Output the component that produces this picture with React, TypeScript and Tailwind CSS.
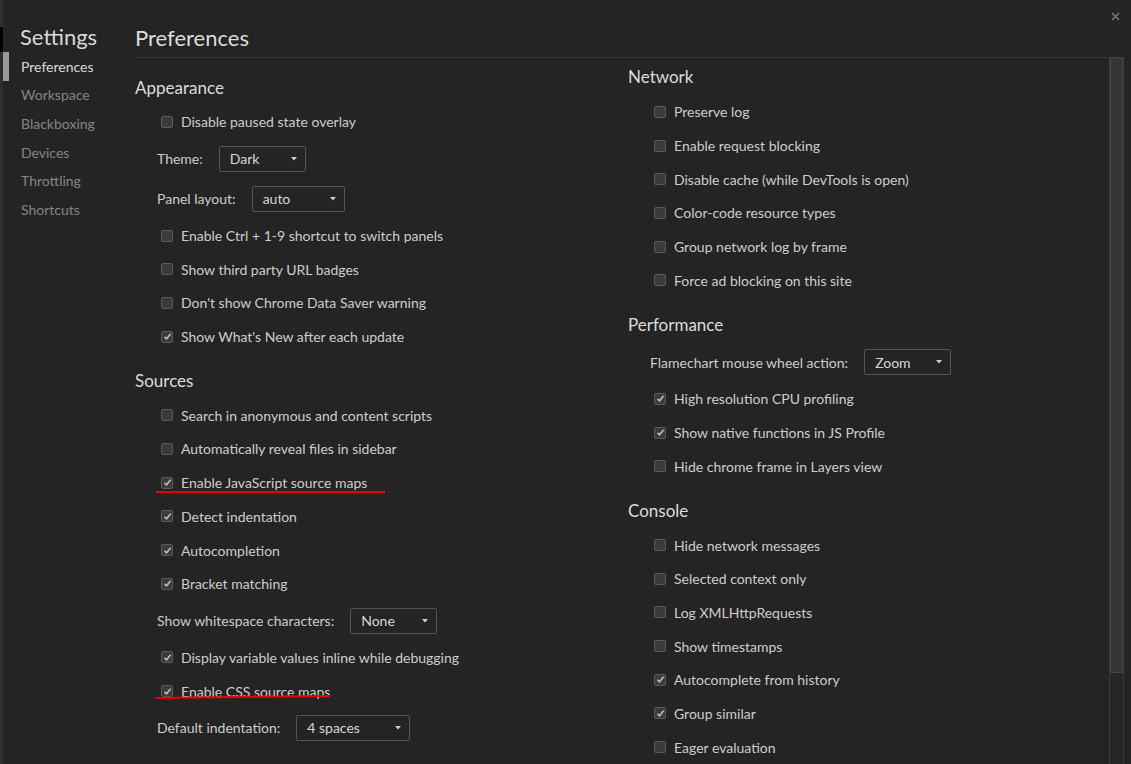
import React from "react";

type Item =
  | { kind: "check"; label: string; checked?: boolean; mark?: "js" | "css" }
  | { kind: "select"; label: string; value: string; width: string };

type Section = { title: string; items: Item[] };

const leftSections: Section[] = [
  {
    title: "Appearance",
    items: [
      { kind: "check", label: "Disable paused state overlay" },
      { kind: "select", label: "Theme:", value: "Dark", width: "w-[87px]" },
      { kind: "select", label: "Panel layout:", value: "auto", width: "w-[93px]" },
      { kind: "check", label: "Enable Ctrl + 1-9 shortcut to switch panels" },
      { kind: "check", label: "Show third party URL badges" },
      { kind: "check", label: "Don't show Chrome Data Saver warning" },
      { kind: "check", label: "Show What's New after each update", checked: true },
    ],
  },
  {
    title: "Sources",
    items: [
      { kind: "check", label: "Search in anonymous and content scripts" },
      { kind: "check", label: "Automatically reveal files in sidebar" },
      { kind: "check", label: "Enable JavaScript source maps", checked: true, mark: "js" },
      { kind: "check", label: "Detect indentation", checked: true },
      { kind: "check", label: "Autocompletion", checked: true },
      { kind: "check", label: "Bracket matching", checked: true },
      { kind: "select", label: "Show whitespace characters:", value: "None", width: "w-[87px]" },
      { kind: "check", label: "Display variable values inline while debugging", checked: true },
      { kind: "check", label: "Enable CSS source maps", checked: true, mark: "css" },
      { kind: "select", label: "Default indentation:", value: "4 spaces", width: "w-[114px]" },
    ],
  },
];

const rightSections: Section[] = [
  {
    title: "Network",
    items: [
      { kind: "check", label: "Preserve log" },
      { kind: "check", label: "Enable request blocking" },
      { kind: "check", label: "Disable cache (while DevTools is open)" },
      { kind: "check", label: "Color-code resource types" },
      { kind: "check", label: "Group network log by frame" },
      { kind: "check", label: "Force ad blocking on this site" },
    ],
  },
  {
    title: "Performance",
    items: [
      { kind: "select", label: "Flamechart mouse wheel action:", value: "Zoom", width: "w-[87px]" },
      { kind: "check", label: "High resolution CPU profiling", checked: true },
      { kind: "check", label: "Show native functions in JS Profile", checked: true },
      { kind: "check", label: "Hide chrome frame in Layers view" },
    ],
  },
  {
    title: "Console",
    items: [
      { kind: "check", label: "Hide network messages" },
      { kind: "check", label: "Selected context only" },
      { kind: "check", label: "Log XMLHttpRequests" },
      { kind: "check", label: "Show timestamps" },
      { kind: "check", label: "Autocomplete from history", checked: true },
      { kind: "check", label: "Group similar", checked: true },
      { kind: "check", label: "Eager evaluation" },
    ],
  },
];

const navItems = ["Preferences", "Workspace", "Blackboxing", "Devices", "Throttling", "Shortcuts"];

function Checkbox({ checked }: { checked?: boolean }) {
  return (
    <span className="flex h-[12px] w-[12px] shrink-0 items-center justify-center rounded-[2px] border border-[#5b5b5b] bg-[#3b3b3b]">
      {checked && (
        <svg width="9" height="9" viewBox="0 0 9 9">
          <path d="M1.5 4.8 L3.6 6.8 L7.6 1.8" fill="none" stroke="#bdbdbd" strokeWidth="1.6" />
        </svg>
      )}
    </span>
  );
}

function Row({ item }: { item: Item }) {
  if (item.kind === "select") {
    return (
      <div className="flex h-[40px] items-center pl-[22px]">
        <span>{item.label}</span>
        <div
          className={`ml-[16px] flex h-[26px] items-center justify-between rounded-[2px] border border-[#555] pl-[10px] pr-[8px] text-[#d6d6d6] ${item.width}`}
        >
          <span>{item.value}</span>
          <svg width="6" height="4" viewBox="0 0 6 4">
            <path d="M0 0 L6 0 L3 3.5 Z" fill="#cfcfcf" />
          </svg>
        </div>
      </div>
    );
  }
  return (
    <div className="relative flex h-[33.7px] items-center pl-[26px]">
      <Checkbox checked={item.checked} />
      <span className="ml-[8px]">{item.label}</span>
      {item.mark === "js" && (
        <div className="absolute left-[21px] top-[25px] h-[2px] w-[229px] bg-[#ee0000]" />
      )}
      {item.mark === "css" && (
        <div className="absolute left-[21px] top-[22px] h-[2px] w-[174px] -rotate-[0.6deg] bg-[#ee0000]" />
      )}
    </div>
  );
}

function SectionBlock({ section, first }: { section: Section; first?: boolean }) {
  return (
    <div>
      <div
        className={`flex items-end text-[17px] leading-[22px] text-[#dcdcdc] ${
          first ? "h-[35px] pb-[7px]" : "h-[45px] pb-[6px]"
        }`}
      >
        {section.title}
      </div>
      {section.items.map((it) => (
        <Row key={it.label} item={it} />
      ))}
    </div>
  );
}

export default function App() {
  return (
    <div className="flex h-[764px] w-[1131px] overflow-hidden bg-[#242424] font-[Lato,'Open_Sans',sans-serif] text-[14px] text-[#cdcdcd]">
      <div className="flex w-[3px] flex-col">
        <div className="h-[27px] bg-[#2f2f2f]" />
        <div className="h-[25px] bg-black" />
        <div className="flex-1 bg-[#2f2f2f]" />
      </div>

      <aside className="w-[132px] shrink-0">
        <div className="pl-[17px] pt-[22px] text-[22px] leading-[30px] text-[#d8d8d8]">Settings</div>
        {navItems.map((n, i) => (
          <div key={n} className="flex h-[28.6px] items-center">
            <div className={`h-full w-[6px] ${i === 0 ? "bg-[#9a9a9a]" : ""}`} />
            <span className={`ml-[12px] ${i === 0 ? "text-[#dadada]" : "text-[#858585]"}`}>{n}</span>
          </div>
        ))}
      </aside>

      <main className="flex min-w-0 flex-1 flex-col">
        <div className="h-[63px] border-b border-[#353535] pt-[24px] text-[22px] leading-[28px] text-[#dcdcdc]">
          Preferences
        </div>
        <div className="flex pt-[2px]">
          <div className="w-[493px] shrink-0">
            {leftSections.map((s) => (
              <SectionBlock key={s.title} section={s} />
            ))}
          </div>
          <div className="flex-1">
            {rightSections.map((s, i) => (
              <SectionBlock key={s.title} section={s} first={i === 0} />
            ))}
          </div>
        </div>
      </main>

      <div className="flex w-[23px] shrink-0 flex-col">
        <div className="flex h-[57px] justify-end pr-[11px] pt-[12px]">
          <svg width="9" height="9" viewBox="0 0 9 9">
            <path d="M1 1 L8 8 M8 1 L1 8" stroke="#7d7d7d" strokeWidth="1.4" />
          </svg>
        </div>
        <div className="ml-[1px] flex w-[15px] flex-1 flex-col border-x border-[#3a3a3a] bg-[#262626]">
          <div className="h-[616px] rounded-[1px] border border-[#474747] bg-[#343434]" />
        </div>
      </div>
    </div>
  );
}
